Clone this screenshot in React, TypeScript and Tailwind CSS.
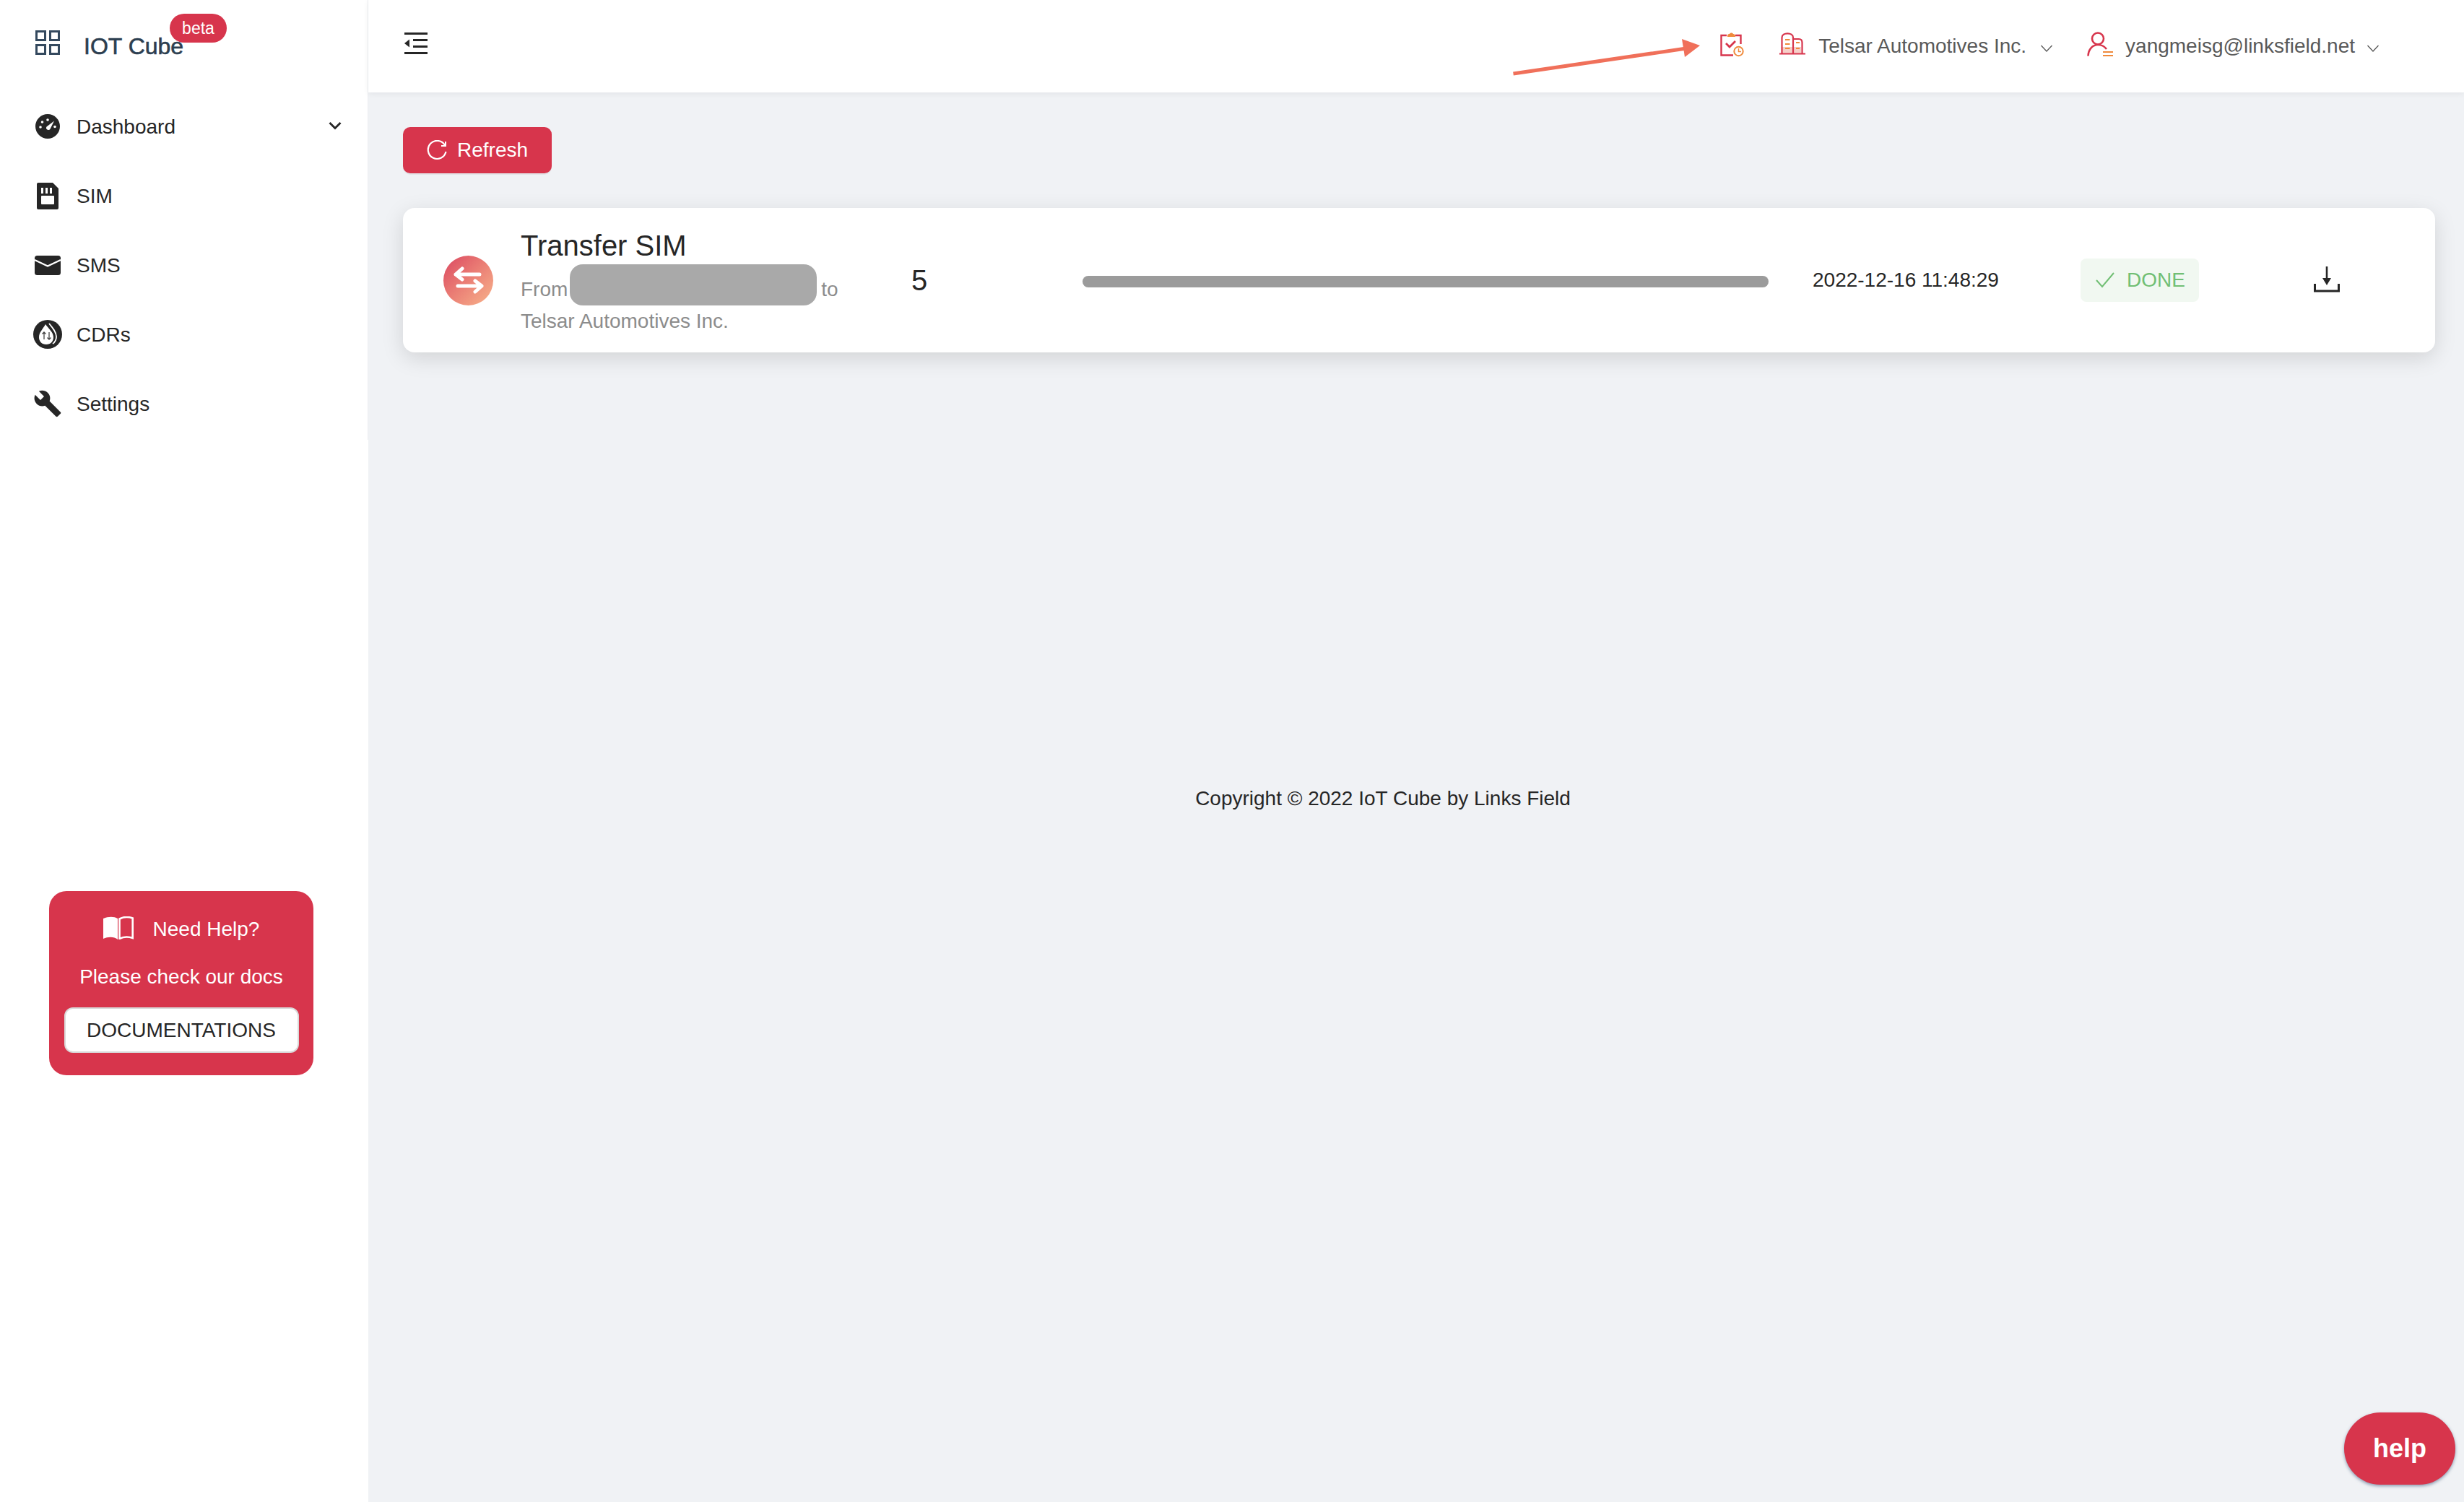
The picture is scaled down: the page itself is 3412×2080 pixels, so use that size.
function GridLogo() {
  return (
    <svg width="34" height="34" viewBox="0 0 34 34" fill="none" stroke="#34495e" strokeWidth="3" className="-mt-[10px] shrink-0">
      <rect x="1.5" y="1.5" width="12" height="12" />
      <rect x="20.5" y="1.5" width="12" height="12" />
      <rect x="1.5" y="20.5" width="12" height="12" />
      <rect x="20.5" y="20.5" width="12" height="12" />
    </svg>
  );
}

function GaugeIcon() {
  return (
    <svg width="34" height="34" viewBox="0 0 34 34">
      <circle cx="17" cy="17" r="17" fill="#262626" />
      <circle cx="7" cy="18" r="1.800" fill="#fff" />
      <circle cx="9.500" cy="11" r="1.800" fill="#fff" />
      <circle cx="17" cy="8" r="1.800" fill="#fff" />
      <path d="M15.500 17.500 L26 9.500 L20.500 20.500 A2.800 2.800 0 0 1 15.500 17.500 Z" fill="#fff" />
      <circle cx="27" cy="17.500" r="1.800" fill="#fff" />
    </svg>
  );
}

function SimIcon() {
  return (
    <svg width="30" height="37" viewBox="0 0 30 37">
      <path d="M2 0 H22 L30 8 V35 A2 2 0 0 1 28 37 H2 A2 2 0 0 1 0 35 V2 A2 2 0 0 1 2 0 Z" fill="#262626" />
      <rect x="6" y="18" width="18" height="12" rx="1" fill="#fff" />
      <rect x="6" y="7" width="3" height="8" fill="#fff" />
      <rect x="12" y="7" width="3" height="8" fill="#fff" />
      <rect x="18" y="7" width="3" height="8" fill="#fff" />
    </svg>
  );
}

function MailIcon() {
  return (
    <svg width="36" height="27" viewBox="0 0 36 27">
      <rect width="36" height="27" rx="3.500" fill="#262626" />
      <path d="M0 6 L18 14.500 L36 6" fill="none" stroke="#fff" strokeWidth="2.400" />
    </svg>
  );
}

function DropIcon() {
  return (
    <svg width="40" height="40" viewBox="0 0 40 40">
      <circle cx="20" cy="20" r="20" fill="#262626" />
      <path d="M17 6 C14 12 8 17 8 24 C8 30 12 34 18 34 C24 34 28 30 28 24 C28 17 21 12 17 6 Z" fill="#fff" />
      <path d="M22 5 C27 11 32 17 32 23 C32 27 30 31 27 33" fill="none" stroke="#fff" strokeWidth="1.800" />
      <path d="M15 27 V17 M12.500 19.500 L15 17 L17.500 19.500 M22 17 V27 M19.500 24.500 L22 27 L24.500 24.500" fill="none" stroke="#444" strokeWidth="1.300" />
    </svg>
  );
}

function WrenchIcon() {
  return (
    <svg width="40" height="40" viewBox="0 0 24 24" fill="#262626">
      <path d="M22.7 19l-9.100-9.100c.9-2.300.4-5-1.500-6.900-2-2-5-2.400-7.400-1.300L9 6 6 9 1.600 4.700C.4 7.100.9 10.100 2.900 12.100c1.900 1.900 4.600 2.400 6.900 1.500l9.100 9.100c.4.400 1 .4 1.400 0l2.300-2.300c.5-.4.5-1.100.1-1.400z" />
    </svg>
  );
}

function NavChevron() {
  return (
    <svg width="18" height="12" viewBox="0 0 18 12" fill="none" stroke="#262626" strokeWidth="2.800" className="ml-auto mr-[36px] -mt-[2px]">
      <path d="M1.500 2 L9 9.500 L16.500 2" />
    </svg>
  );
}

function NavRow({ icon, label, chevron }: { icon: React.ReactNode; label: string; chevron?: boolean }) {
  return (
    <div className="flex h-[96px] items-center">
      <div className="flex w-[106px] shrink-0 pl-[46px]">
        <div className="flex w-[40px] justify-center">{icon}</div>
      </div>
      <span className="mt-[2px] text-[28px] leading-[44px] text-[#262626]">{label}</span>
      {chevron && <NavChevron />}
    </div>
  );
}

function BookIcon() {
  return (
    <svg width="42" height="32" viewBox="0 0 42 32" className="shrink-0">
      <path d="M0 3 C7 0 15 0 20 3 V32 C15 28 7 28 0 31 Z" fill="#fff" />
      <path d="M22.500 3.500 C28 0.500 35 0.500 40.700 2.500 V30 C35 28 28 28 22.500 31 Z" fill="none" stroke="#fff" strokeWidth="2.600" />
    </svg>
  );
}

function CollapseIcon() {
  return (
    <svg width="32" height="30" viewBox="0 0 32 30" fill="#262626">
      <rect width="32" height="3" y="0" />
      <rect x="12" width="20" height="3" y="9" />
      <rect x="12" width="20" height="3" y="18" />
      <rect width="32" height="3" y="27" />
      <path d="M0 15 L7 9.500 V20.500 Z" />
    </svg>
  );
}

function TaskIcon() {
  return (
    <svg width="33" height="34" viewBox="0 0 33 34" fill="none">
      <path d="M9 4 H1.500 V31.500 H18 M21 4 H28.500 V16" stroke="#d7354c" strokeWidth="2.400" />
      <path d="M10 5 C10 2 12 2 13 2 C14 0 17 0 18 2 C20 2 21 3 21 6 H10 Z" fill="#ef8a3c" />
      <path d="M8 15 L13 20 L21 12" stroke="#d7354c" strokeWidth="2.800" />
      <circle cx="25.500" cy="26" r="6.200" fill="#fff" stroke="#ef8a3c" strokeWidth="2" />
      <path d="M25.500 22 V26.500 H29" stroke="#ef8a3c" strokeWidth="1.500" />
    </svg>
  );
}

function BuildingIcon() {
  return (
    <svg width="36" height="31" viewBox="0 0 36 31" fill="none">
      <path d="M2.500 20 H30 V30 H2.500 Z" fill="#f6cfc9" />
      <path d="M0 29.500 H36 M3.500 29.500 V7 C3.500 -0.500 19 -0.500 19 7 V29.500 M19 9 H27 C30 9 31.500 11 31.500 14 V29.500" stroke="#d7354c" strokeWidth="2.200" />
      <path d="M8 10 H14.500 M8 16 H14.500 M8 22 H14.500 M23 14 H28 M23 22 H28" stroke="#ef8a3c" strokeWidth="2" />
    </svg>
  );
}

function UserIcon() {
  return (
    <svg width="37" height="34" viewBox="0 0 37 34" fill="none">
      <circle cx="15" cy="9.500" r="8" stroke="#d7354c" strokeWidth="2.600" />
      <path d="M1.500 33.500 C2 24 8 18 15 18 C20 18 24 20 27 24" stroke="#d7354c" strokeWidth="2.600" />
      <path d="M22 28 H36 M22 33 H36" stroke="#ef8a3c" strokeWidth="2.200" />
    </svg>
  );
}

function ThinChevron() {
  return (
    <svg width="18" height="10" viewBox="0 0 18 10" fill="none" stroke="#595959" strokeWidth="1.300" className="mt-[6px] shrink-0">
      <path d="M1.500 1 L9 9 L16.500 1" />
    </svg>
  );
}

function ReloadIcon() {
  return (
    <svg width="28" height="28" viewBox="0 0 28 28" fill="none" stroke="#fff" strokeWidth="2.200" className="shrink-0">
      <path d="M25 7 A12.500 12.500 0 1 0 26.500 16" />
      <path d="M26 2 V8 H20" strokeWidth="2" />
    </svg>
  );
}

function SwapIcon() {
  return (
    <div className="flex h-[69px] w-[69px] shrink-0 items-center justify-center rounded-full bg-gradient-to-br from-[#da4460] to-[#f7b48c]">
      <svg width="42" height="38" viewBox="0 0 42 38" fill="none" stroke="#fff" strokeWidth="5" strokeLinecap="round" strokeLinejoin="round">
        <path d="M12 3 L3 11 L12 18 M3 11 H36" />
        <path d="M30 20 L39 27 L30 35 M39 27 H6" />
      </svg>
    </div>
  );
}

function CheckIcon() {
  return (
    <svg width="26" height="22" viewBox="0 0 26 22" fill="none" stroke="#71bf74" strokeWidth="2" className="shrink-0">
      <path d="M1 11 L9 20 L25 1" />
    </svg>
  );
}

function DownloadIcon() {
  return (
    <svg width="36" height="36" viewBox="0 0 36 36" fill="none" stroke="#262626">
      <path d="M18 0 V22" strokeWidth="2.600" />
      <path d="M12 16 H24 L18 26 Z" fill="#262626" strokeWidth="0" />
      <path d="M1.500 24 V34 H34.500 V24" strokeWidth="3" />
    </svg>
  );
}

function PointerArrow() {
  return (
    <svg width="270" height="60" viewBox="0 0 270 60" className="absolute left-[2090px] top-[48px]">
      <path d="M5.500 54 L245 19" stroke="#f0705a" strokeWidth="5" />
      <path d="M239 6 L264 15 L243 31 Z" fill="#f0705a" />
    </svg>
  );
}

export default function App() {
  return (
    <div className="relative flex h-[2080px] w-[3412px] overflow-hidden bg-[#f0f2f5] font-['Liberation_Sans',Arial,sans-serif] text-[28px] text-[#262626]">
      <aside className="flex h-full w-[510px] shrink-0 flex-col bg-white">
        <div className="h-[609px] border-r border-[#eceef1]">
          <div className="relative flex h-[127px] items-center pl-[49px]">
            <GridLogo />
            <span className="ml-[33px] text-[32px] leading-[44px] text-[#2c3e50] [-webkit-text-stroke:0.6px_#2c3e50]">IOT Cube</span>
            <span className="absolute left-[235px] top-[19px] flex h-[40px] w-[79px] items-center justify-center rounded-full bg-[#d7354c] text-[23px] text-white">
              beta
            </span>
          </div>
          <NavRow icon={<GaugeIcon />} label="Dashboard" chevron />
          <NavRow icon={<SimIcon />} label="SIM" />
          <NavRow icon={<MailIcon />} label="SMS" />
          <NavRow icon={<DropIcon />} label="CDRs" />
          <NavRow icon={<WrenchIcon />} label="Settings" />
        </div>
        <div className="ml-[68px] mt-[625px] flex h-[255px] w-[366px] flex-col items-center rounded-[24px] bg-[#d7354c] pt-[29px] text-white">
          <div className="flex h-[44px] items-center gap-[27px]">
            <BookIcon />
            <span className="mt-[3px]">Need Help?</span>
          </div>
          <div className="mt-[24px] leading-[44px]">Please check our docs</div>
          <button className="mt-[20px] h-[63px] w-[325px] rounded-[12px] border-2 border-[#d9d9d9] bg-white text-[28px] text-[#262626]">
            DOCUMENTATIONS
          </button>
        </div>
      </aside>

      <div className="flex min-w-0 flex-1 flex-col">
        <header className="flex h-[128px] shrink-0 items-center bg-white pl-[50px] pr-[117px] shadow-[0_2px_8px_rgba(0,21,41,0.06)]">
          <div className="-mt-[8px]">
            <CollapseIcon />
          </div>
          <div className="ml-auto flex items-center">
            <div className="-mt-[4px]">
              <TaskIcon />
            </div>
            <div className="ml-[49px] -mt-[8px]">
              <BuildingIcon />
            </div>
            <span className="ml-[18px] text-[#595959]">Telsar Automotives Inc.</span>
            <div className="ml-[19px]">
              <ThinChevron />
            </div>
            <div className="ml-[47px] -mt-[6px]">
              <UserIcon />
            </div>
            <span className="ml-[16px] text-[#595959]">yangmeisg@linksfield.net</span>
            <div className="ml-[16px]">
              <ThinChevron />
            </div>
          </div>
        </header>

        <main className="flex flex-col pl-[48px] pr-[40px] pt-[48px]">
          <button className="flex h-[64px] w-[206px] items-center gap-[14px] rounded-[10px] bg-[#d7354c] pl-[33px] text-white shadow-[0_2px_0_rgba(0,0,0,0.05)]">
            <ReloadIcon />
            <span>Refresh</span>
          </button>

          <section className="mt-[48px] flex h-[200px] items-center rounded-[16px] bg-white pl-[56px] shadow-[0_8px_30px_rgba(0,0,0,0.13)]">
            <SwapIcon />
            <div className="ml-[38px] mt-[7px] w-[541px] shrink-0">
              <div className="text-[40px] leading-[48px] text-[#262626]">Transfer SIM</div>
              <div className="mt-[15px] w-[480px] leading-[44px] text-[#8c8c8c]">
                From
                <span className="relative -top-[8px] -my-[10px] ml-[3px] mr-[6px] inline-block h-[57px] w-[342px] rounded-[18px] bg-[#a9a9a9] align-middle" />
                to Telsar Automotives Inc.
              </div>
            </div>
            <div className="w-[237px] shrink-0 text-[40px] leading-[48px]">5</div>
            <div className="mt-[4px] h-[16px] w-[950px] shrink-0 rounded-full bg-[#9b9b9b]" />
            <div className="ml-[61px] w-[259px] shrink-0 whitespace-nowrap">2022-12-16 11:48:29</div>
            <div className="ml-[112px] flex h-[60px] w-[164px] shrink-0 items-center gap-[17px] rounded-[8px] bg-[#f1f8f1] pl-[21px] text-[#71bf74]">
              <CheckIcon />
              <span>DONE</span>
            </div>
            <div className="ml-[159px] mt-[-2px] shrink-0">
              <DownloadIcon />
            </div>
          </section>

          <footer className="mr-[100px] mt-[596px] text-center leading-[44px]">Copyright © 2022 IoT Cube by Links Field</footer>
        </main>
      </div>

      <PointerArrow />

      <button className="absolute left-[3246px] top-[1956px] h-[100px] w-[154px] rounded-full bg-[#d7354c] text-[36px] font-bold text-white shadow-[0_2px_4px_rgba(40,70,110,0.5)]">
        help
      </button>
    </div>
  );
}
